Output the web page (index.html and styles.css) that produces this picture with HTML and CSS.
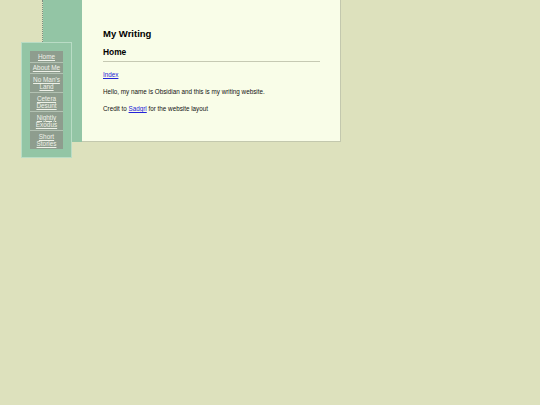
FILE: index.html
```html
<!DOCTYPE html>
<html lang="en">
<head>
<meta charset="utf-8">
<title>My Writing</title>
<link rel="stylesheet" href="styles.css">
</head>
<body>
<div class="page">
  <div class="sidebar">
    <nav class="nav">
      <a class="nav-item" href="#">Home</a>
      <a class="nav-item" href="#">About Me</a>
      <a class="nav-item" href="#">No Man's Land</a>
      <a class="nav-item" href="#">Cetera Desunt</a>
      <a class="nav-item" href="#">Nightly Exodus</a>
      <a class="nav-item" href="#">Short Stories</a>
    </nav>
  </div>
  <main class="main">
    <h1 class="title">My Writing</h1>
    <h2 class="subtitle">Home</h2>
    <p class="text"><a class="link" href="#">Index</a></p>
    <p class="text">Hello, my name is Obsidian and this is my writing website.</p>
    <p class="text">Credit to <a class="link" href="#">Sadgrl</a> for the website layout</p>
  </main>
</div>
</body>
</html>
```
FILE: styles.css
```css
html, body {
  margin: 0;
  padding: 0;
  min-height: 100%;
}
html {
  height: 100%;
}
body {
  background: #dde1bd;
  font-family: "Liberation Sans", Arial, sans-serif;
  color: #1e1e1e;
}
.page {
  display: flex;
  align-items: flex-start;
  margin-left: 42px;
}
.sidebar {
  position: relative;
  align-self: stretch;
  width: 39px;
  background: #93c5a5;
  background-clip: padding-box;
  border-left: 1px dotted #7f8c80;
}
.nav {
  position: absolute;
  z-index: 2;
  left: -22px;
  top: 42px;
  width: 33px;
  padding: 8px;
  border: 1px solid #b9dcc5;
  background: #93c5a5;
}
.nav-item {
  display: block;
  background: #8e9d8e;
  color: #eef1e8;
  font-size: 6.4px;
  line-height: 7.5px;
  text-align: center;
  padding: 1.5px 0;
  border-bottom: 1px solid #b3c2b3;
}
.nav-item:last-child {
  border-bottom: 0;
}
.main {
  width: 217px;
  padding: 28px 20px 28px 21px;
  background: #f9fde8;
  border-right: 1px solid #c3c8ae;
  border-bottom: 1px solid #c3c8ae;
}
.title {
  margin: 0;
  font-size: 9.5px;
  line-height: 11px;
  font-weight: bold;
  color: #000;
}
.subtitle {
  margin: 8px 0 0;
  padding-bottom: 4px;
  font-size: 8.4px;
  line-height: 10px;
  font-weight: bold;
  color: #000;
  border-bottom: 1px solid #c6c9b3;
}
.text {
  margin: 9.3px 0 0;
  font-size: 6.3px;
  line-height: 8px;
  color: #111;
}
.subtitle + .text {
  margin-top: 8.5px;
}
.link {
  color: #2323d8;
}
```
